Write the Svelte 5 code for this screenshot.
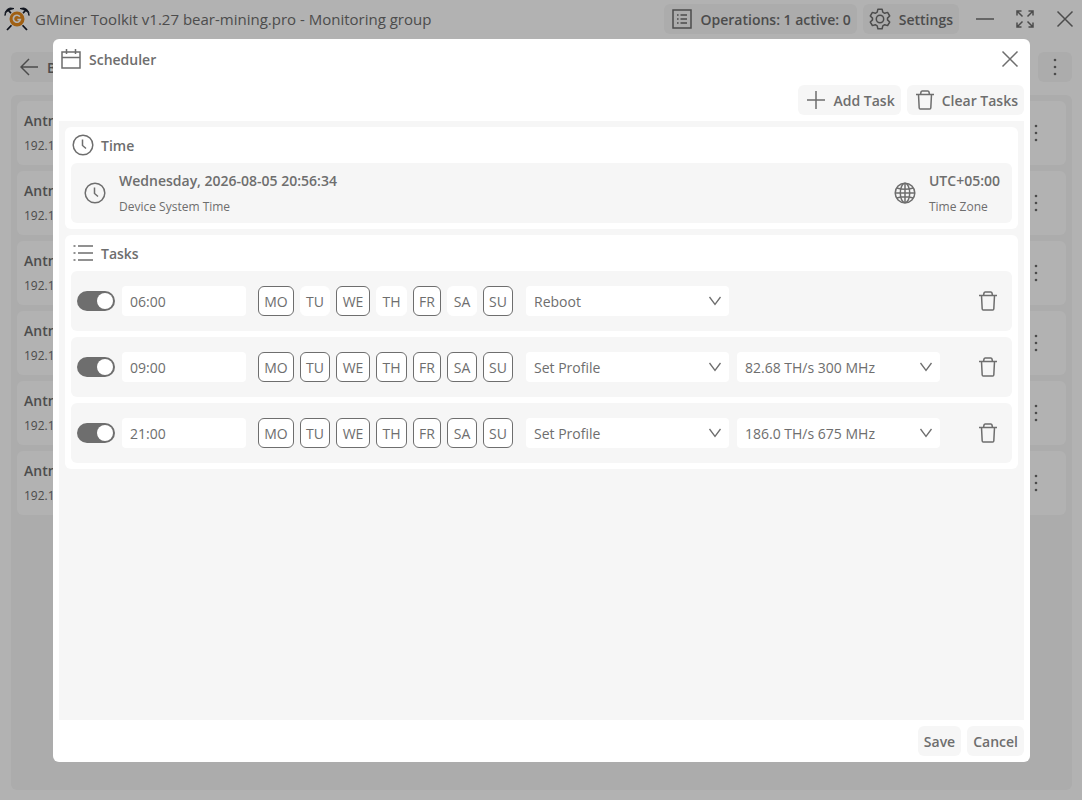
<script>
  const miners = [1, 2, 3, 4, 5, 6];
  const dayNames = ['MO', 'TU', 'WE', 'TH', 'FR', 'SA', 'SU'];
  let tasks = $state([
    { on: true, time: '06:00', days: [true, false, true, false, true, false, true], action: 'Reboot', profile: '' },
    { on: true, time: '09:00', days: Array(7).fill(true), action: 'Set Profile', profile: '82.68 TH/s 300 MHz' },
    { on: true, time: '21:00', days: Array(7).fill(true), action: 'Set Profile', profile: '186.0 TH/s 675 MHz' }
  ]);
</script>

{#snippet trash()}
  <svg width="20" height="20" viewBox="0 0 20 20" class="ico"><path d="M1 4.5h18M3.500 4.500 4.200 18q.1 1 1 1h9.600q.9 0 1-1l.7-13.500M5.500 4.500 6 2q.2-1 1.200-1h5.600q1 0 1.200 1l.5 2.500" /></svg>
{/snippet}

{#snippet clock()}
  <svg width="22" height="22" viewBox="0 0 22 22" class="ico"><circle cx="11" cy="11" r="9.800" /><path d="M10.500 5.500v6l3.500 3" /></svg>
{/snippet}

{#snippet dots()}
  <svg width="4" height="18" viewBox="0 0 4 18" class="dots"><circle cx="2" cy="2" r="1.300" /><circle cx="2" cy="9" r="1.300" /><circle cx="2" cy="16" r="1.300" /></svg>
{/snippet}

{#snippet cross()}
  <svg width="18" height="18" viewBox="0 0 18 18" class="ico"><path d="M1.500 1.500l15 15M16.500 1.500l-15 15" /></svg>
{/snippet}

{#snippet chevron()}
  <svg width="14" height="10" viewBox="0 0 14 10" class="ico chevron"><path d="M1.500 1 7 8.500 12.500 1" /></svg>
{/snippet}

<div class="window">
  <header class="titlebar">
    <svg width="26" height="26" viewBox="0 0 26 26" class="logo">
      <path d="M3 24 22 4M23 24 4 4" stroke="#161c2a" stroke-width="1.800" />
      <path d="M1 9.500Q1 6 4.500 4.500T10 2.500Q5.500 1 3 3.500T1 9.500zM25 9.500Q25 6 21.500 4.500T16 2.500Q20.500 1 23 3.500T25 9.500z" fill="#161c2a" stroke="#161c2a" stroke-width="1" />
      <circle cx="13" cy="13" r="8.500" fill="#fff" />
      <circle cx="13" cy="13" r="7.500" fill="#e58a1c" />
      <path d="M15.800 10.800a3.500 3.500 0 1 0 .5 2.700h-3" fill="none" stroke="#fff" stroke-width="1.700" />
    </svg>
    <h1>GMiner Toolkit v1.27 bear-mining.pro - Monitoring group</h1>
    <button class="btn ops">
      <svg width="20" height="20" viewBox="0 0 20 20" class="ico"><path d="M1 1h18v18H1zM8.500 6h6.500M8.500 10h6.500M8.500 14h6.500M5 6h1.600M5 10h1.600M5 14h1.600" /></svg>
      Operations: 1 active: 0
    </button>
    <button class="btn">
      <svg width="22" height="22" viewBox="0 0 22 22" class="ico"><circle cx="11" cy="11" r="3.700" /><path d="M8.900 1.200h4.200l.7 3 1.900 1.100 2.900-.9 2.100 3.600-2.200 2.100v1.800l2.200 2.100-2.100 3.600-2.900-.9-1.900 1.100-.7 3H8.900l-.7-3-1.900-1.100-2.900.9L1.300 14l2.200-2.100v-1.800L1.300 8l2.100-3.600 2.900.9 1.900-1.100z" stroke-linejoin="round" /></svg>
      Settings
    </button>
    <div class="controls">
      <button aria-label="Minimize"><svg width="18" height="18" viewBox="0 0 18 18" class="ico"><path d="M0 9h18" /></svg></button>
      <button aria-label="Maximize"><svg width="18" height="18" viewBox="0 0 18 18" class="ico"><path d="M1 5.500V1h4.500M1 1l5.500 5.500M12.500 1H17v4.500M17 1l-5.500 5.500M1 12.500V17h4.500M1 17l5.500-5.500M17 12.500V17h-4.500M17 17l-5.500-5.500" /></svg></button>
      <button aria-label="Close window">{@render cross()}</button>
    </div>
  </header>
  <nav class="toolbar">
    <button class="btn back">
      <svg width="18" height="18" viewBox="0 0 18 18" class="ico"><path d="M18 9H1M9 1 1 9l8 8" /></svg>
      Back
    </button>
    <button class="btn more" aria-label="More">{@render dots()}</button>
  </nav>
  <main class="list">
    {#each miners as id (id)}
      <article>
        <div>
          <strong>Antminer</strong>
          <small>192.168</small>
        </div>
        <button class="plain" aria-label="Miner menu">{@render dots()}</button>
      </article>
    {/each}
  </main>
</div>

<div class="overlay">
  <div class="dialog" role="dialog" aria-modal="true" aria-labelledby="heading">
    <header class="head">
      <svg width="20" height="20" viewBox="0 0 20 20" class="ico"><path d="M1 3h18v16H1zM1 8.500h18M5.500 0v5M14.500 0v5" /></svg>
      <h2 id="heading">Scheduler</h2>
      <button class="plain" aria-label="Close">{@render cross()}</button>
    </header>
    <div class="actions">
      <button class="btn add">
        <svg width="18" height="18" viewBox="0 0 18 18" class="ico"><path d="M9 0v18M0 9h18" /></svg>
        Add Task
      </button>
      <button class="btn clear">{@render trash()}Clear Tasks</button>
    </div>
    <div class="body">
      <section>
        <h3>{@render clock()}Time</h3>
        <div class="item clockrow">
          {@render clock()}
          <div class="info grow">
            <strong>Wednesday, 2026-08-05 20:56:34</strong>
            <small>Device System Time</small>
          </div>
          <svg width="22" height="22" viewBox="0 0 22 22" class="ico globe"><circle cx="11" cy="11" r="9.800" /><ellipse cx="11" cy="11" rx="4.700" ry="9.800" /><path d="M11 1v20M1 11h20M2.800 6q8.200 2.600 16.400 0M2.800 16q8.200-2.600 16.400 0" /></svg>
          <div class="info">
            <strong>UTC+05:00</strong>
            <small>Time Zone</small>
          </div>
        </div>
      </section>
      <section>
        <h3>
          <svg width="22" height="22" viewBox="0 0 22 22" class="ico"><path d="M6 4h15M6 11h15M6 18h15M1.500 4h2M1.500 11h2M1.500 18h2" /></svg>
          Tasks
        </h3>
        <div class="rows">
          {#each tasks as task, i}
            <div class="item task">
              <input class="switch" type="checkbox" role="switch" aria-label="Task enabled" bind:checked={task.on} />
              <input class="field time" type="text" aria-label="Start time" bind:value={task.time} />
              <div class="days">
                {#each dayNames as day, d}
                  <button class="day" class:on={task.days[d]} aria-pressed={task.days[d]} onclick={() => (task.days[d] = !task.days[d])}>{day}</button>
                {/each}
              </div>
              <div class="pick">
                <select class="field" aria-label="Action" bind:value={task.action}>
                  <option>Reboot</option>
                  <option>Set Profile</option>
                </select>
                {@render chevron()}
              </div>
              {#if task.action === 'Set Profile'}
                <div class="pick profile">
                  <select class="field" aria-label="Profile" bind:value={task.profile}>
                    <option>82.68 TH/s 300 MHz</option>
                    <option>186.0 TH/s 675 MHz</option>
                  </select>
                  {@render chevron()}
                </div>
              {/if}
              <button class="plain remove" aria-label="Delete task" onclick={() => tasks.splice(i, 1)}>{@render trash()}</button>
            </div>
          {/each}
        </div>
      </section>
    </div>
    <footer>
      <button class="btn">Save</button>
      <button class="btn">Cancel</button>
    </footer>
  </div>
</div>

<style>
  :global(body) {
    background: #fff;
    color: #6e6e6e;
    font: 14px/21px "Open Sans", "Noto Sans", sans-serif;
  }
  :global(*) { box-sizing: border-box; }
  h1, h2, h3 { margin: 0; font-size: 14px; line-height: 21px; font-weight: 600; }
  h1 { font-size: 15px; font-weight: 500; }
  button, input, select { font: inherit; color: inherit; border: 0; margin: 0; }
  button { background: none; padding: 0; }
  svg { display: block; flex: none; }
  .ico { fill: none; stroke: currentColor; stroke-width: 1.5; }
  .dots { fill: currentColor; }
  strong { font-weight: 600; }
  small { font-size: 12px; }

  .window { height: 100vh; display: flex; flex-direction: column; padding: 0 10px 10px 11px; }
  .titlebar { display: flex; align-items: center; height: 38px; gap: 6px; margin: 0 -6px 0 -7px; }
  .titlebar h1 { flex: 1; margin-left: -1px; white-space: nowrap; }
  .btn {
    display: flex; align-items: center; justify-content: center; gap: 8px;
    height: 30px; padding: 0 6px; border-radius: 6px;
    background: #f6f6f6; font-weight: 600; white-space: nowrap;
  }
  .ops { padding-left: 8px; }
  .controls { display: flex; gap: 22px; margin: 0 4px 0 11px; }
  .toolbar { display: flex; justify-content: space-between; padding: 14px 0 13px; }
  .back { padding-left: 9px; gap: 9px; }
  .more { width: 34px; }
  .list { flex: 1; background: #f6f6f6; border-radius: 6px; padding: 6px; display: flex; flex-direction: column; gap: 6px; }
  article { height: 64px; padding: 0 28px 0 7px; background: #fff; border-radius: 6px; display: flex; align-items: center; justify-content: space-between; }
  article div { display: flex; flex-direction: column; gap: 4px; }

  .overlay { position: fixed; inset: 0; display: flex; padding: 39px 52px 38px 53px; background: rgba(0, 0, 0, 0.3); }
  .dialog { flex: 1; min-width: 0; display: flex; flex-direction: column; background: #fff; border-radius: 6px; padding: 0 6px 6px; }
  .head { display: flex; align-items: center; gap: 8px; height: 40px; padding: 0 5px 0 2px; }
  .head h2 { flex: 1; }
  .actions { display: flex; justify-content: flex-end; gap: 6px; padding: 6px 0; }
  .add { padding-left: 9px; }
  .clear { padding-left: 8px; gap: 7px; }
  .body { flex: 1; min-height: 0; overflow: auto; background: #f6f6f6; padding: 6px; display: flex; flex-direction: column; gap: 6px; }
  section { background: #fff; border-radius: 6px; padding: 0 6px 6px; }
  h3 { display: flex; align-items: center; gap: 7px; height: 36px; padding-left: 1px; }
  .item { display: flex; align-items: center; height: 60px; background: #f6f6f6; border-radius: 6px; }
  .clockrow { padding: 0 12px 0 13px; gap: 13px; }
  .info { display: flex; flex-direction: column; gap: 5px; }
  .grow { flex: 1; }
  .rows { display: flex; flex-direction: column; gap: 6px; }
  .task { padding: 0 14px 0 6px; }
  .switch { appearance: none; display: flex; width: 38px; height: 20px; padding: 2px; border-radius: 10px; background: #b5b5b5; flex: none; }
  .switch:checked { background: #6e6e6e; justify-content: flex-end; }
  .switch::before { content: ""; width: 16px; height: 16px; border-radius: 8px; background: #fff; }
  .field { height: 30px; padding: 0 8px; border-radius: 4px; background: #fff; appearance: none; width: 100%; }
  .time { width: 124px; margin-left: 7px; }
  .days { display: grid; grid-template-columns: 36px 30px 34px 31px 28px 30px 30px; gap: 6px; margin: 0 13px 0 12px; }
  .day { height: 30px; border-radius: 6px; background: #fff; border: 1px solid #fff; text-align: center; }
  .day.on { border-color: #6e6e6e; }
  .pick { width: 203px; display: grid; align-items: center; }
  .pick > :global(*) { grid-area: 1 / 1; }
  .chevron { justify-self: end; margin-right: 7px; pointer-events: none; stroke-width: 1.3; }
  .profile { margin-left: 8px; }
  .remove { margin-left: auto; }
  footer { display: flex; justify-content: flex-end; gap: 6px; padding-top: 6px; }
</style>
